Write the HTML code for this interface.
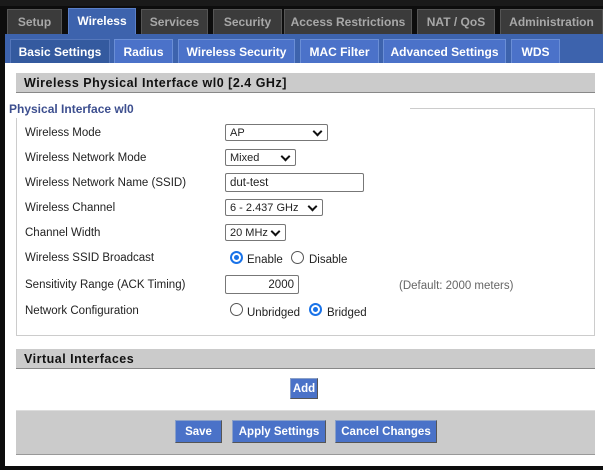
<!DOCTYPE html>
<html><head><style>
*{margin:0;padding:0;box-sizing:border-box}
body{width:603px;height:470px;background:#0d0d0d;position:relative;overflow:hidden;font-family:"Liberation Sans",sans-serif;font-size:11.5px;color:#222}
.a{position:absolute;white-space:nowrap}
.tab{position:absolute;top:9px;height:25px;background:#3b3b3b;color:#a8a8a8;font-weight:bold;font-size:12px;text-align:center;line-height:25px;border:1px solid #555;border-bottom:none;white-space:nowrap;overflow:hidden}
.tab.on{background:#3d63ad;color:#fff;top:8px;height:26px;border-color:#5a7fc8}
.sub{position:absolute;top:39px;height:24px;background:#4b72c9;color:#fff;font-weight:bold;font-size:12px;text-align:center;line-height:24px;border:1px solid #6a8ed6;border-bottom:none;white-space:nowrap;overflow:hidden}
.sub.on{background:#345a9f;border-color:#5577bb}
.hdr{position:absolute;left:16px;width:579px;height:20px;background:#cbcbcb;border-bottom:1px solid #888;font-weight:bold;font-size:12.5px;color:#111;padding-left:8px;line-height:20px;letter-spacing:.5px}
.lbl{position:absolute;left:25px;color:#222;white-space:nowrap}
.sel{position:absolute;left:225px;height:17px;border:1px solid #777;background:#fff;padding-left:4px;line-height:16px;border-radius:2px;white-space:nowrap;font-size:11px}
.sel:after{content:"";position:absolute;right:6px;top:3px;width:5px;height:5px;border-right:2px solid #111;border-bottom:2px solid #111;transform:rotate(45deg)}
.inp{position:absolute;left:225px;height:19px;border:1px solid #777;background:#fff;padding:0 4px;line-height:18px;border-radius:2px}
.rad{position:absolute;width:13px;height:13px;border:1px solid #555;border-radius:50%;background:#fff}
.rad.on{border:2px solid #1a73e8}
.rad.on:after{content:"";position:absolute;left:2px;top:2px;width:5px;height:5px;border-radius:50%;background:#1a73e8}
.btn{position:absolute;height:23px;background:#4a72c8;color:#fff;font-size:11.5px;font-weight:bold;text-align:center;line-height:22px;border:1px solid #8aa0c8;border-right-color:#555;border-bottom-color:#555;white-space:nowrap}
</style></head><body>
<div class="a" style="left:0;top:0;width:603px;height:6px;background:#1a1a1a"></div>
<div class="a" style="left:5px;top:34px;width:598px;height:29px;background:#3d63ad"></div>
<div class="tab" style="left:7px;width:55px">Setup</div>
<div class="tab on" style="left:68px;width:68px">Wireless</div>
<div class="tab" style="left:141px;width:67px">Services</div>
<div class="tab" style="left:213px;width:69px">Security</div>
<div class="tab" style="left:284px;width:128px">Access Restrictions</div>
<div class="tab" style="left:417px;width:78px">NAT / QoS</div>
<div class="tab" style="left:500px;width:103px">Administration</div>
<div class="sub on" style="left:10px;width:100px">Basic Settings</div>
<div class="sub" style="left:114px;width:59px">Radius</div>
<div class="sub" style="left:178px;width:117px">Wireless Security</div>
<div class="sub" style="left:300px;width:79px">MAC Filter</div>
<div class="sub" style="left:383px;width:123px">Advanced Settings</div>
<div class="sub" style="left:511px;width:49px">WDS</div>
<div class="a" style="left:5px;top:63px;width:598px;height:403px;background:#fff"></div>
<div class="hdr" style="top:73px">Wireless Physical Interface wl0 [2.4 GHz]</div>
<div class="a" style="left:410px;top:108px;width:185px;height:228px;border-top:1px solid #ccc;border-right:1px solid #ccc"></div>
<div class="a" style="left:16px;top:118px;width:579px;height:218px;border-left:1px solid #ccc;border-bottom:1px solid #ccc;border-right:1px solid #ccc"></div>
<div class="a" style="left:9px;top:102px;font-weight:bold;font-size:12px;color:#3d4f8f">Physical Interface wl0</div>
<div class="lbl" style="top:127px">Wireless Mode</div>
<div class="sel" style="left:225px;top:124px;width:103px">AP</div>
<div class="lbl" style="top:152px">Wireless Network Mode</div>
<div class="sel" style="top:149px;width:71px">Mixed</div>
<div class="lbl" style="top:177px">Wireless Network Name (SSID)</div>
<div class="inp" style="top:173px;width:139px">dut-test</div>
<div class="lbl" style="top:202px">Wireless Channel</div>
<div class="sel" style="top:199px;width:98px">6 - 2.437 GHz</div>
<div class="lbl" style="top:227px">Channel Width</div>
<div class="sel" style="top:224px;width:61px">20 MHz</div>
<div class="lbl" style="top:252px">Wireless SSID Broadcast</div>
<div class="rad on" style="left:230px;top:251px"></div><div class="a" style="left:247px;top:254px">Enable</div>
<div class="rad" style="left:291px;top:251px"></div><div class="a" style="left:309px;top:254px">Disable</div>
<div class="lbl" style="top:279px">Sensitivity Range (ACK Timing)</div>
<div class="inp" style="top:275px;width:74px;text-align:right">2000</div>
<div class="a" style="left:399px;top:280px;color:#666">(Default: 2000 meters)</div>
<div class="lbl" style="top:305px">Network Configuration</div>
<div class="rad" style="left:230px;top:303px"></div><div class="a" style="left:247px;top:307px">Unbridged</div>
<div class="rad on" style="left:309px;top:303px"></div><div class="a" style="left:327px;top:307px">Bridged</div>
<div class="hdr" style="top:349px">Virtual Interfaces</div>
<div class="btn" style="left:290px;top:378px;width:28px;height:21px;line-height:20px">Add</div>
<div class="a" style="left:16px;top:410px;width:579px;height:45px;background:#cbcbcb;border-top:1px solid #ddd;border-bottom:1px solid #999"></div>
<div class="btn" style="left:175px;top:420px;width:47px">Save</div>
<div class="btn" style="left:232px;top:420px;width:94px">Apply Settings</div>
<div class="btn" style="left:335px;top:420px;width:102px">Cancel Changes</div>
</body></html>
